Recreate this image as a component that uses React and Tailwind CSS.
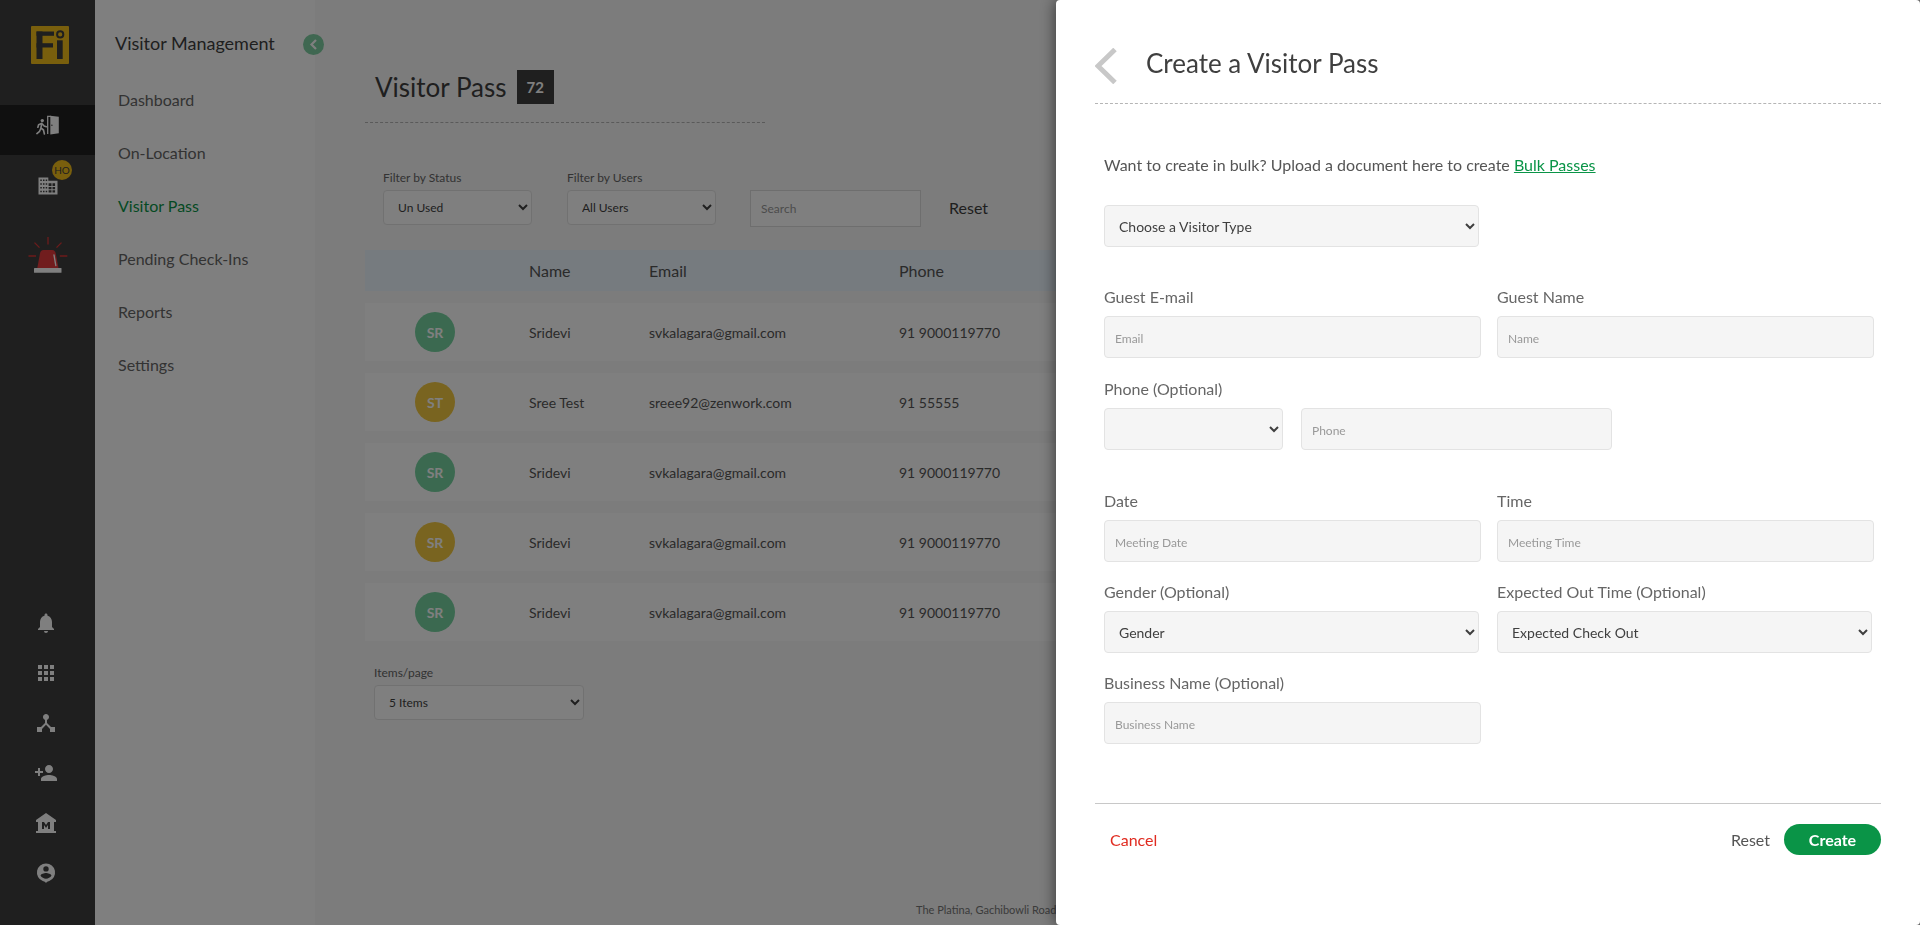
import React from "react";
import {
  MdNotifications,
  MdApps,
  MdDeviceHub,
  MdPersonAdd,
  MdMuseum,
} from "react-icons/md";

const menu = ["Dashboard", "On-Location", "Visitor Pass", "Pending Check-Ins", "Reports", "Settings"];

const rows = [
  { initials: "SR", color: "bg-[#76d3a0]", name: "Sridevi", email: "svkalagara@gmail.com", phone: "91 9000119770" },
  { initials: "ST", color: "bg-[#f3c840]", name: "Sree Test", email: "sreee92@zenwork.com", phone: "91 55555" },
  { initials: "SR", color: "bg-[#76d3a0]", name: "Sridevi", email: "svkalagara@gmail.com", phone: "91 9000119770" },
  { initials: "SR", color: "bg-[#f3c840]", name: "Sridevi", email: "svkalagara@gmail.com", phone: "91 9000119770" },
  { initials: "SR", color: "bg-[#76d3a0]", name: "Sridevi", email: "svkalagara@gmail.com", phone: "91 9000119770" },
];

function Logo() {
  return (
    <svg width="38" height="38" viewBox="0 0 38 38" role="img" aria-label="Fi">
      <rect width="38" height="38" rx="1" fill="#f3bf1a" />
      <g fill="#3f3f3f">
        <rect x="5.500" y="5.500" width="6" height="27.500" />
        <rect x="5.500" y="5.500" width="17.500" height="4.300" />
        <rect x="5.500" y="17.200" width="16.500" height="4.300" />
        <rect x="26" y="14.300" width="5.700" height="18.700" />
      </g>
      <circle cx="29.200" cy="8.400" r="3.100" fill="none" stroke="#3f3f3f" strokeWidth="2" />
    </svg>
  );
}

function DoorIcon() {
  return (
    <svg width="24" height="20" viewBox="0 0 24 20" aria-hidden="true">
      <circle cx="6.300" cy="5.600" r="1.700" fill="#fff" />
      <path
        d="M5.800 8.200 4.900 13l2.600 2 .9 4M4.900 13.200 3.600 16.300.9 18.600M5.400 8.600 2.600 9.700 1.900 12.300M6.400 9l1.700 2 2.200.8"
        fill="none"
        stroke="#fff"
        strokeWidth="1.600"
        strokeLinecap="round"
        strokeLinejoin="round"
      />
      <path d="M11.700 19V1.300H15" fill="none" stroke="#fff" strokeWidth="1.300" />
      <path d="M14.300.8 22.800 1.700V18.300L14.300 19.600Z" fill="#fff" />
      <circle cx="15.900" cy="10.200" r=".7" fill="#3f3f3f" />
    </svg>
  );
}

function BuildingIcon() {
  return (
    <svg width="20" height="18" viewBox="0 0 20 18" aria-hidden="true">
      <path d="M.5.500h9.800v3.300h9.200V17.500H.5Z" fill="#fff" />
      <g fill="#3f3f3f">
        <path d="M2.300 2.400h1.500v1.500H2.300zM5 2.400h1.500v1.500H5zM7.700 2.400h1.500v1.500H7.700zM2.300 6.200h1.500v1.500H2.300zM5 6.200h1.500v1.500H5zM7.700 6.200h1.500v1.500H7.700zM2.300 10h1.500v1.500H2.300zM5 10h1.500v1.500H5zM7.700 10h1.500v1.500H7.700zM2.300 13.800h1.500v1.500H2.300zM5 13.800h1.500v1.500H5zM7.700 13.800h1.500v1.500H7.700z" />
        <path d="M10.600 6.300h2.900v2.600h-2.900zM14.500 6.300h2.600v2.600h-2.600zM10.600 10h2.900v2.200h-2.900zM14.500 10h2.600v2.200h-2.600zM10.600 13.300h2.900v2.300h-2.900zM14.500 13.300h2.600v2.300h-2.600z" />
      </g>
    </svg>
  );
}

function SirenIcon() {
  return (
    <svg width="40" height="36" viewBox="0 0 40 36" aria-hidden="true">
      <path
        d="M20 0v7.500M6.500 5.600l5 5M33.500 5.600l-5 5M.5 19H8M31.800 19h7.500"
        stroke="#d93636"
        strokeWidth="1.300"
        fill="none"
      />
      <path d="M9.300 31 12 16.500c.4-2.200 1.500-3.500 3.500-3.500h8.700c2 0 3.100 1.300 3.500 3.500L30.500 31Z" fill="#e23a3d" />
      <path d="m26 18 1.800 10.500" stroke="#fff" strokeWidth="1.400" strokeLinecap="round" />
      <rect x="6" y="31" width="27.500" height="4.800" rx=".6" fill="#fff" />
    </svg>
  );
}

function PersonPinIcon() {
  return (
    <svg width="24" height="24" viewBox="0 0 24 24" aria-hidden="true">
      <path
        fillRule="evenodd"
        fill="currentColor"
        d="M12 2.500a9 9 0 0 0-3.300 17.400c1 .4 2 .6 2.400 1.200l.9 1 .9-1c.4-.6 1.400-.8 2.400-1.200A9 9 0 0 0 12 2.500Zm0 2.700a2.700 2.700 0 1 1 0 5.400 2.700 2.700 0 0 1 0-5.400Zm0 12.500c-2.300 0-4.200-1.200-5.400-2.900.1-1.800 3.600-2.700 5.400-2.700s5.300.9 5.400 2.700c-1.200 1.700-3.100 2.900-5.400 2.900Z"
      />
    </svg>
  );
}

const railButtons = [
  ["Notifications", MdNotifications],
  ["Apps", MdApps],
  ["Integrations", MdDeviceHub],
  ["Add person", MdPersonAdd],
  ["Locations", MdMuseum],
  ["Profile", PersonPinIcon],
];

function Rail() {
  return (
    <nav className="flex w-[95px] shrink-0 flex-col justify-between bg-[#3f3f3f] pb-[27px] text-white">
      <div className="flex flex-col">
        <a href="#home" className="flex h-[105px] justify-center pt-[26px] pl-1">
          <Logo />
        </a>
        <a href="#visitors" aria-label="Visitors" className="flex h-[50px] justify-center bg-[#202020] pt-[10px]">
          <DoorIcon />
        </a>
        <a href="#office" aria-label="Office" className="relative flex h-[82px] justify-center pt-[22px]">
          <BuildingIcon />
          <span className="absolute top-[5px] left-[52px] flex size-5 items-center justify-center rounded-full bg-[#f3bf1a] text-[10px] leading-none text-[#3f3f3f]">
            HO
          </span>
        </a>
        <a href="#emergency" aria-label="Emergency" className="flex justify-center">
          <SirenIcon />
        </a>
      </div>
      <div className="flex flex-col">
        {railButtons.map(([label, Icon]) => (
          <button key={label} aria-label={label} className="flex h-[50px] items-center justify-center pr-[3px]">
            <Icon size={24} />
          </button>
        ))}
      </div>
    </nav>
  );
}

function Sidebar() {
  return (
    <aside className="relative w-[220px] shrink-0 bg-white">
      <h2 className="pt-[31px] pl-5 text-[18px] leading-6 text-[#3f3f3f]">Visitor Management</h2>
      <button
        aria-label="Collapse menu"
        className="absolute top-[34px] -right-[9px] flex size-[21px] items-center justify-center rounded-full bg-[#7fcfa2]"
      >
        <svg width="9" height="11" viewBox="0 0 9 11" aria-hidden="true">
          <path d="M7 1 2.500 5.500 7 10" fill="none" stroke="#fff" strokeWidth="2.200" />
        </svg>
      </button>
      <ul className="flex flex-col gap-[29px] pt-[33px] pl-[23px]">
        {menu.map((item) => (
          <li key={item} className="leading-6">
            <a href="#menu" className={item === "Visitor Pass" ? "text-[#0a9447]" : "text-[#666]"}>
              {item}
            </a>
          </li>
        ))}
      </ul>
    </aside>
  );
}

function FilterSelect({ id, label, value, className }) {
  return (
    <div className={`flex flex-col gap-0.5 ${className}`}>
      <label htmlFor={id} className="text-[12px] leading-5 text-[#666]">
        {label}
      </label>
      <select
        id={id}
        className="h-[35px] w-full rounded-[4px] border border-[#e3e3e3] bg-white pl-[10px] text-[12px] text-[#3f3f3f]"
      >
        <option>{value}</option>
      </select>
    </div>
  );
}

function Main() {
  return (
    <main className="flex min-w-0 grow flex-col bg-[#f8f8f8] pt-[70px] pr-[50px] pl-[50px]">
      <div className="flex w-[400px] items-center gap-[10px] border-b border-dashed border-[#b5b5b5] pb-[18px] pl-[10px]">
        <h1 className="text-[26px] leading-[34px] text-[#3f3f3f]">Visitor Pass</h1>
        <span className="bg-[#3f3f3f] px-[10px] text-[15px] leading-[34px] font-bold text-white">72</span>
      </div>

      <div className="flex items-start pt-[45px] pl-[18px]">
        <FilterSelect id="status" label="Filter by Status" value="Un Used" className="w-[149px]" />
        <FilterSelect id="users" label="Filter by Users" value="All Users" className="ml-[35px] w-[149px]" />
        <input
          aria-label="Search"
          placeholder="Search"
          className="mt-[22px] ml-[34px] h-[37px] w-[171px] border border-[#dcdcdc] bg-white px-[10px] text-[12px] placeholder:text-[#999]"
        />
        <button className="mt-[22px] ml-7 h-[35px] text-[#3f3f3f]">Reset</button>
      </div>

      <table className="mt-[11px] w-full table-fixed border-separate border-spacing-x-0 border-spacing-y-3 text-left text-[#555]">
        <thead>
          <tr className="h-[41px] bg-[#ecf6ff] text-[16px]">
            <th className="w-[150px]" aria-label="Avatar" />
            <th className="w-[120px] pl-[14px] font-normal">Name</th>
            <th className="w-[250px] pl-[14px] font-normal">Email</th>
            <th className="pl-[14px] font-normal">Phone</th>
          </tr>
        </thead>
        <tbody>
          {rows.map((r, i) => (
            <tr key={i} className="h-[58px] bg-white text-[14px]">
              <td className="pl-[50px]">
                <span className={`flex size-10 items-center justify-center rounded-full font-bold text-white ${r.color}`}>
                  {r.initials}
                </span>
              </td>
              <td className="pl-[14px]">{r.name}</td>
              <td className="pl-[14px]">{r.email}</td>
              <td className="pl-[14px]">{r.phone}</td>
            </tr>
          ))}
        </tbody>
      </table>

      <div className="pt-[10px] pl-[9px]">
        <FilterSelect id="perpage" label="Items/page" value="5 Items" className="w-[210px]" />
      </div>

      <footer className="mt-auto pb-[5px] pl-[551px] text-[11px] leading-5 text-[#777]">
        The Platina, Gachibowli Road
      </footer>
    </main>
  );
}

const control = "h-[42px] w-full rounded-[4px] border border-[#e3e3e3] bg-[#f5f5f5] ";
const inputStyle = control + "px-[10px] pt-[2px] text-[12px] text-[#3f3f3f] placeholder:text-[#999]";
const selectStyle = control + "pl-[10px] text-[14px] text-[#3f3f3f]";

function Field({ id, label, option }) {
  return (
    <div className="flex flex-col gap-[7px]">
      <label htmlFor={id} className="leading-6 text-[#666]">
        {label}
      </label>
      {option ? (
        <div className="flex pr-0.5">
          <select id={id} className={selectStyle}>
            <option>{option}</option>
          </select>
        </div>
      ) : (
        <input id={id} placeholder={id} className={inputStyle} />
      )}
    </div>
  );
}

function Drawer() {
  return (
    <section
      role="dialog"
      aria-labelledby="drawer-title"
      className="fixed inset-y-0 right-0 w-[45%] overflow-hidden rounded-[4px] bg-white px-[39px] pt-10 shadow-[0_0_16px_rgba(0,0,0,0.6)]"
    >
      <header className="flex items-start gap-[29px] border-b border-dashed border-[#b5b5b5] pb-[19px]">
        <button aria-label="Back" className="pt-2">
          <svg width="22" height="36" viewBox="0 0 22 36" aria-hidden="true">
            <path d="M20 1.500 3 18l17 16.500" fill="none" stroke="#c8c8c8" strokeWidth="5" />
          </svg>
        </button>
        <h2 id="drawer-title" className="pt-[6px] text-[26px] leading-[34px] text-[#3f3f3f]">
          Create a Visitor Pass
        </h2>
      </header>

      <form className="pt-[49px] pr-[7px] pl-[9px]">
        <p className="leading-6 text-[#555]">
          Want to create in bulk? Upload a document here to create{" "}
          <a href="#bulk" className="text-[#0a9447] underline">
            Bulk Passes
          </a>
        </p>

        <div className="grid grid-cols-2 gap-x-4 pt-7">
          <div className="flex pr-0.5">
            <select aria-label="Visitor type" className={selectStyle}>
              <option>Choose a Visitor Type</option>
            </select>
          </div>
        </div>

        <div className="grid grid-cols-2 gap-x-4 pt-[38px]">
          <Field id="Email" label="Guest E-mail" />
          <Field id="Name" label="Guest Name" />
        </div>

        <div className="flex flex-col gap-[7px] pt-[19px]">
          <label htmlFor="Phone" className="leading-6 text-[#666]">
            Phone (Optional)
          </label>
          <div className="flex gap-[18px]">
            <div className="w-[179px]">
              <select aria-label="Country code" className={selectStyle}>
                <option></option>
              </select>
            </div>
            <div className="w-[311px]">
              <input id="Phone" placeholder="Phone" className={inputStyle} />
            </div>
          </div>
        </div>

        <div className="grid grid-cols-2 gap-x-4 gap-y-[18px] pt-[39px]">
          <Field id="Meeting Date" label="Date" />
          <Field id="Meeting Time" label="Time" />
          <Field id="gender" label="Gender (Optional)" option="Gender" />
          <Field id="checkout" label="Expected Out Time (Optional)" option="Expected Check Out" />
          <Field id="Business Name" label="Business Name (Optional)" />
        </div>
      </form>

      <footer className="mt-[59px] flex items-center justify-between border-t border-[#c8c8c8] pt-5 pl-[15px]">
        <button className="text-[#e02b20]">Cancel</button>
        <div className="flex items-center gap-[14px]">
          <button className="text-[#555]">Reset</button>
          <button className="h-[31px] w-[97px] rounded-full bg-[#0a9447] font-bold text-white">Create</button>
        </div>
      </footer>
    </section>
  );
}

export default function App() {
  return (
    <div className="flex min-h-screen font-['Lato',sans-serif] text-[16px]">
      <Rail />
      <Sidebar />
      <Main />
      <div className="fixed inset-0 bg-black/50" />
      <Drawer />
    </div>
  );
}
